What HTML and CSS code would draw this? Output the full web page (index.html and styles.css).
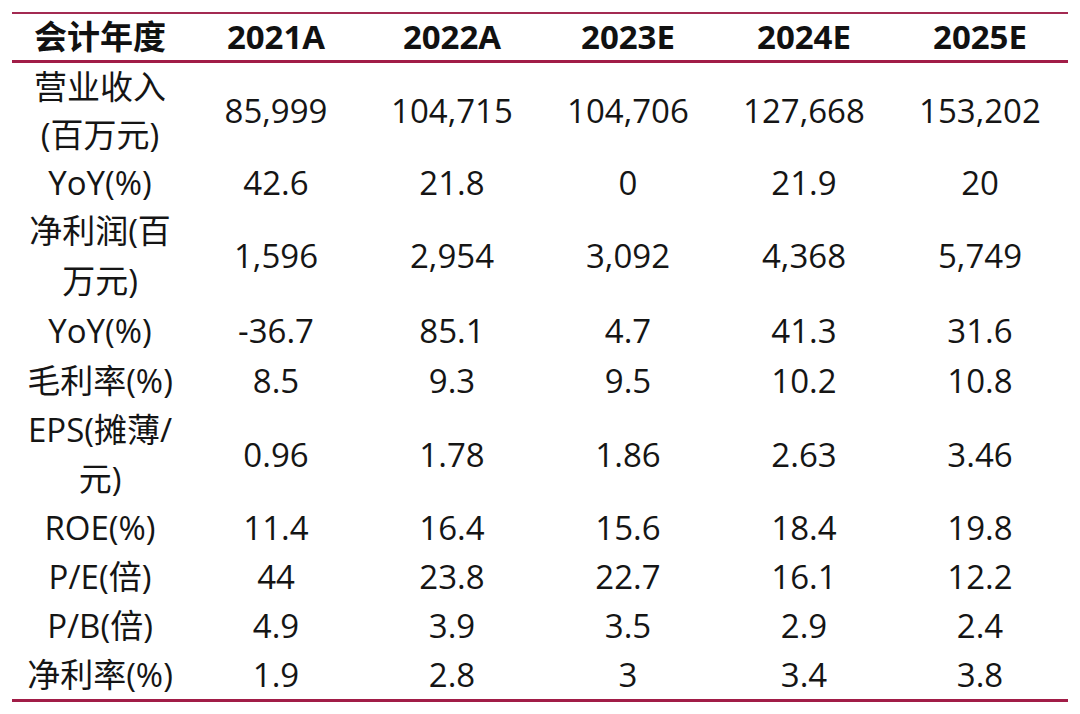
FILE: index.html
```html
<!DOCTYPE html>
<html lang="zh-CN">
<head>
<meta charset="utf-8">
<link rel="stylesheet" href="styles.css">
</head>
<body>
<table class="fin">
  <colgroup>
    <col class="c"><col class="c"><col class="c"><col class="c"><col class="c"><col class="c">
  </colgroup>
  <thead>
    <tr>
      <th>会计年度</th><th>2021A</th><th>2022A</th><th>2023E</th><th>2024E</th><th>2025E</th>
    </tr>
  </thead>
  <tbody>
    <tr class="lh48"><td>营业收入<br>(百万元)</td><td>85,999</td><td>104,715</td><td>104,706</td><td>127,668</td><td>153,202</td></tr>
    <tr class="lh47"><td>YoY(%)</td><td>42.6</td><td>21.8</td><td>0</td><td>21.9</td><td>20</td></tr>
    <tr class="lh50"><td>净利润(百<br>万元)</td><td>1,596</td><td>2,954</td><td>3,092</td><td>4,368</td><td>5,749</td></tr>
    <tr class="lh50"><td>YoY(%)</td><td>-36.7</td><td>85.1</td><td>4.7</td><td>41.3</td><td>31.6</td></tr>
    <tr><td>毛利率(%)</td><td>8.5</td><td>9.3</td><td>9.5</td><td>10.2</td><td>10.8</td></tr>
    <tr><td>EPS(摊薄/<br>元)</td><td>0.96</td><td>1.78</td><td>1.86</td><td>2.63</td><td>3.46</td></tr>
    <tr><td>ROE(%)</td><td>11.4</td><td>16.4</td><td>15.6</td><td>18.4</td><td>19.8</td></tr>
    <tr><td>P/E(倍)</td><td>44</td><td>23.8</td><td>22.7</td><td>16.1</td><td>12.2</td></tr>
    <tr><td>P/B(倍)</td><td>4.9</td><td>3.9</td><td>3.5</td><td>2.9</td><td>2.4</td></tr>
    <tr><td>净利率(%)</td><td>1.9</td><td>2.8</td><td>3</td><td>3.4</td><td>3.8</td></tr>
  </tbody>
</table>
</body>
</html>
```
FILE: styles.css
```css
html, body {
  margin: 0;
  padding: 0;
  background: #ffffff;
}
body {
  padding: 12px 12px 0 12px;
  font-family: "Open Sans", "Noto Sans CJK SC", sans-serif;
  color: #151515;
}
.fin {
  width: 1056px;
  border-collapse: collapse;
  table-layout: fixed;
  border-top: 2px solid #a32a52;
  border-bottom: 3px solid #a11d47;
}
.fin col.c {
  width: 176px;
}
.fin th {
  height: 46px;
  padding: 0;
  font-size: 33px;
  font-weight: 700;
  line-height: 46px;
  text-align: center;
  border-bottom: 3px solid #a11d47;
  color: #111111;
}
.fin td {
  padding: 0;
  font-size: 33px;
  font-weight: 400;
  line-height: 49px;
  text-align: center;
  vertical-align: middle;
  white-space: nowrap;
}
.fin tr.lh47 td {
  line-height: 47px;
}
.fin tr.lh48 td {
  line-height: 48px;
}
.fin tr.lh50 td {
  line-height: 50px;
}
```
